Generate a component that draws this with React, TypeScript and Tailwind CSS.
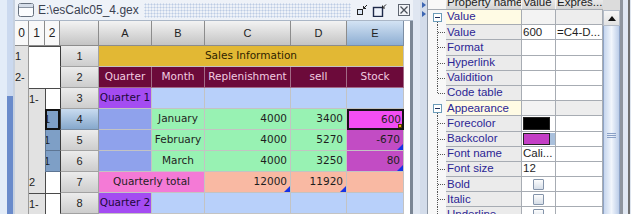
import React from 'react';

type CellProps = { className: string; children?: React.ReactNode };

function Cell({ className, children }: CellProps) {
  return <div className={`relative flex items-center overflow-hidden whitespace-nowrap ${className}`}>{children}</div>;
}

// blue comment marker in the bottom right corner of a cell
function Corner() {
  return (
    <svg className="absolute bottom-0 right-0" width="6" height="6" viewBox="0 0 6 6">
      <polygon points="6,0 6,6 0,6" fill="#1632e6" />
    </svg>
  );
}

function TitleBar() {
  return (
    <div className="flex h-[21px] items-center border-b border-[#aab6c6] bg-[#eef2f8]">
      <svg className="ml-[3px] shrink-0" width="16" height="14" viewBox="0 0 16 14">
        <rect x="0.5" y="0.5" width="15" height="13" rx="2" fill="#fbfcfe" stroke="#66707e" />
        <rect x="1" y="1" width="14" height="3" fill="#d5dde9" />
        <line x1="1" y1="4.5" x2="15" y2="4.5" stroke="#8a94a2" />
      </svg>
      <span className="ml-[4px] text-[12px] text-[#3a4150]">{'E:\\esCalc05_4.gex'}</span>
      <div className="mx-[5px] h-[15px] flex-1 bg-[image:radial-gradient(circle,#bccbe4_0.9px,transparent_1.1px)] bg-[length:3px_3px]" />
      <svg className="shrink-0" width="12" height="12" viewBox="0 0 12 12">
        <rect x="1.5" y="5.5" width="5" height="5" fill="#dbe6f5" stroke="#222" />
        <path d="M11 1 L7.5 4.5 M7.5 2 V4.5 H10" stroke="#222" fill="none" />
      </svg>
      <svg className="ml-[4px] shrink-0" width="15" height="13" viewBox="0 0 15 13">
        <rect x="1.5" y="3.5" width="9" height="9" fill="#eef3fb" stroke="#1e2a4a" strokeWidth="1.4" />
        <path d="M14 0.5 L10.5 4 M10.5 1.5 V4 H13" stroke="#222" fill="none" />
      </svg>
      <svg className="ml-[11px] mr-[3px] shrink-0" width="12" height="12" viewBox="0 0 12 12">
        <rect x="0.5" y="0.5" width="11" height="11" fill="#f2f4f8" stroke="#5d6470" />
        <path d="M2.5 2.5 L9.5 9.5 M9.5 2.5 L2.5 9.5" stroke="#4a505a" strokeWidth="1.3" />
      </svg>
    </div>
  );
}

function Sheet() {
  const line = 'border-r border-b border-[#c3c3c3]';
  const colHead = "justify-center border-r border-b border-[#8c8c8c] bg-linear-to-b from-[#f3f3f3] to-[#c4c4c4] font-['Liberation_Sans',Arial,sans-serif] text-[11px] text-[#222]";
  const rowHead = "justify-center border-r border-b border-l border-[#a2a2a2] border-l-[#3c3c3c] bg-linear-to-b from-[#ececec] to-[#cdcdcd] font-['Liberation_Sans',Arial,sans-serif] text-[11px] text-[#222]";
  const outline = "bg-[#e2e2e2] font-['Liberation_Sans',Arial,sans-serif] text-[11px] text-[#222]";
  const lvl = "justify-center border-r border-b border-[#8c8c8c] bg-[#f9f9f9] font-['Liberation_Sans',Arial,sans-serif] text-[12px] text-[#222]";

  return (
    <div className="grid w-[389px] grid-cols-[14px_16px_15px_39px_53px_53px_86px_56px_57px] grid-rows-[25px_repeat(8,21px)] font-['DejaVu_Sans',sans-serif] text-[10.5px] text-[#1e1e1e]">
      {/* header row */}
      <Cell className={`col-start-1 row-start-1 ${lvl}`}>0</Cell>
      <Cell className={`col-start-2 row-start-1 ${lvl}`}>1</Cell>
      <Cell className={`col-start-3 row-start-1 ${lvl}`}>2</Cell>
      <Cell className={`col-start-4 row-start-1 ${colHead}`} />
      <Cell className={`col-start-5 row-start-1 ${colHead}`}>A</Cell>
      <Cell className={`col-start-6 row-start-1 ${colHead}`}>B</Cell>
      <Cell className={`col-start-7 row-start-1 ${colHead}`}>C</Cell>
      <Cell className={`col-start-8 row-start-1 ${colHead}`}>D</Cell>
      <Cell className="col-start-9 row-start-1 justify-center border-r border-b border-[#7c8ea4] bg-linear-to-b from-[#d3e3f4] to-[#8eaed2] font-['Liberation_Sans',Arial,sans-serif] text-[11px] text-[#222]">E</Cell>

      {/* outline levels */}
      <Cell className={`col-start-1 row-start-2 border-r border-[#9a9a9a] ${outline}`}>1</Cell>
      <Cell className={`col-start-1 row-start-3 border-r border-[#9a9a9a] ${outline}`}>2-</Cell>
      <Cell className={`col-start-1 row-start-4 row-span-6 border-r border-[#9a9a9a] ${outline}`} />
      <Cell className="col-start-2 col-span-2 row-start-2 row-span-2 border-t border-[#4a4a4a] bg-white" />
      <Cell className={`col-start-2 row-start-4 border-t border-[#4a4a4a] ${outline}`}>1-</Cell>
      <Cell className="col-start-3 row-start-4 border-t border-l border-[#4a4a4a] bg-white" />
      <Cell className={`col-start-2 row-start-5 row-span-3 ${outline}`} />
      <Cell className="col-start-3 row-start-5 border-2 border-[#111] bg-[#7e9fc6] pl-0 text-[11px] font-['Liberation_Sans',Arial,sans-serif]"><span className="-ml-[3px]">1</span></Cell>
      <Cell className="col-start-3 row-start-6 border-b border-l border-[#5d7593] bg-[#7e9fc6] text-[11px] font-['Liberation_Sans',Arial,sans-serif]"><span className="-ml-[2px]">1</span></Cell>
      <Cell className="col-start-3 row-start-7 border-b border-l border-[#5d7593] bg-[#7e9fc6] text-[11px] font-['Liberation_Sans',Arial,sans-serif]"><span className="-ml-[2px]">1</span></Cell>
      <Cell className={`col-start-2 row-start-8 ${outline}`}>2</Cell>
      <Cell className="col-start-3 row-start-8 border-l border-[#4a4a4a] bg-white" />
      <Cell className={`col-start-2 row-start-9 border-t border-[#4a4a4a] ${outline}`}>1-</Cell>
      <Cell className="col-start-3 row-start-9 border-t border-l border-[#4a4a4a] bg-white" />

      {/* row numbers */}
      <Cell className={`col-start-4 row-start-2 ${rowHead}`}>1</Cell>
      <Cell className={`col-start-4 row-start-3 ${rowHead}`}>2</Cell>
      <Cell className={`col-start-4 row-start-4 ${rowHead}`}>3</Cell>
      <Cell className="col-start-4 row-start-5 justify-center border-r border-b border-l border-[#7c8ea4] border-l-[#3c3c3c] bg-linear-to-b from-[#c9dcf0] to-[#86a8cc] font-['Liberation_Sans',Arial,sans-serif] text-[11px] text-[#222]">4</Cell>
      <Cell className={`col-start-4 row-start-6 ${rowHead}`}>5</Cell>
      <Cell className={`col-start-4 row-start-7 ${rowHead}`}>6</Cell>
      <Cell className={`col-start-4 row-start-8 ${rowHead}`}>7</Cell>
      <Cell className={`col-start-4 row-start-9 ${rowHead}`}>8</Cell>

      {/* sheet row 1 */}
      <Cell className={`col-start-5 col-span-5 row-start-2 justify-center bg-[#e2b834] text-[#2e2300] ${line}`}>Sales Information</Cell>

      {/* sheet row 2 */}
      <Cell className="col-start-5 row-start-3 justify-center border-r border-b border-[#a26a86] bg-[#6c0a3a] text-[#f2cde0]">Quarter</Cell>
      <Cell className="col-start-6 row-start-3 justify-center border-r border-b border-[#a26a86] bg-[#6c0a3a] text-[#f2cde0]">Month</Cell>
      <Cell className="col-start-7 row-start-3 justify-center border-r border-b border-[#a26a86] bg-[#6c0a3a] text-[#f2cde0]">Replenishment</Cell>
      <Cell className="col-start-8 row-start-3 justify-center border-r border-b border-[#a26a86] bg-[#6c0a3a] text-[#f2cde0]">sell</Cell>
      <Cell className="col-start-9 row-start-3 justify-center border-r border-b border-[#a26a86] bg-[#6c0a3a] text-[#f2cde0]">Stock</Cell>

      {/* sheet row 3 */}
      <Cell className={`col-start-5 row-start-4 justify-center bg-[#a44cf2] text-[#1c0838] ${line}`}>Quarter 1</Cell>
      <Cell className={`col-start-6 row-start-4 bg-[#b8d0fa] ${line}`} />
      <Cell className={`col-start-7 row-start-4 bg-[#b8d0fa] ${line}`} />
      <Cell className={`col-start-8 row-start-4 bg-[#b8d0fa] ${line}`} />
      <Cell className={`col-start-9 row-start-4 bg-[#b8d0fa] ${line}`} />

      {/* sheet rows 4-6 */}
      <Cell className={`col-start-5 row-start-5 bg-[#8fa2ec] ${line}`} />
      <Cell className={`col-start-6 row-start-5 justify-center bg-[#98f2b3] ${line}`}>January</Cell>
      <Cell className={`col-start-7 row-start-5 justify-end pr-[3px] bg-[#98f2b3] ${line}`}>4000</Cell>
      <Cell className={`col-start-8 row-start-5 justify-end pr-[3px] bg-[#98f2b3] ${line}`}>3400</Cell>
      <Cell className="col-start-9 row-start-5 justify-end border-2 border-[#151515] bg-[#f24ef2] pr-[1px]">
        600
        <span className="absolute bottom-0 right-0 h-[4px] w-[4px] border border-[#5a3a00] bg-[#f0a818]" />
      </Cell>

      <Cell className={`col-start-5 row-start-6 bg-[#8fa2ec] ${line}`} />
      <Cell className={`col-start-6 row-start-6 justify-center bg-[#98f2b3] ${line}`}>February</Cell>
      <Cell className={`col-start-7 row-start-6 justify-end pr-[3px] bg-[#98f2b3] ${line}`}>4000</Cell>
      <Cell className={`col-start-8 row-start-6 justify-end pr-[3px] bg-[#98f2b3] ${line}`}>5270</Cell>
      <Cell className={`col-start-9 row-start-6 justify-end pr-[3px] bg-[#c24cc4] ${line}`}>-670<Corner /></Cell>

      <Cell className={`col-start-5 row-start-7 bg-[#8fa2ec] ${line}`} />
      <Cell className={`col-start-6 row-start-7 justify-center bg-[#98f2b3] ${line}`}>March</Cell>
      <Cell className={`col-start-7 row-start-7 justify-end pr-[3px] bg-[#98f2b3] ${line}`}>4000</Cell>
      <Cell className={`col-start-8 row-start-7 justify-end pr-[3px] bg-[#98f2b3] ${line}`}>3250</Cell>
      <Cell className={`col-start-9 row-start-7 justify-end pr-[3px] bg-[#c24cc4] ${line}`}>80<Corner /></Cell>

      {/* sheet row 7 */}
      <Cell className={`col-start-5 col-span-2 row-start-8 justify-center bg-[#f47ad6] ${line}`}>Quarterly total</Cell>
      <Cell className={`col-start-7 row-start-8 justify-end pr-[3px] bg-[#f9b9a3] ${line}`}>12000<Corner /></Cell>
      <Cell className={`col-start-8 row-start-8 justify-end pr-[3px] bg-[#f9b9a3] ${line}`}>11920<Corner /></Cell>
      <Cell className={`col-start-9 row-start-8 bg-[#f9b9a3] ${line}`} />

      {/* sheet row 8 */}
      <Cell className={`col-start-5 row-start-9 justify-center bg-[#a44cf2] text-[#1c0838] ${line}`}>Quarter 2</Cell>
      <Cell className={`col-start-6 row-start-9 bg-[#b8d0fa] ${line}`} />
      <Cell className={`col-start-7 row-start-9 bg-[#b8d0fa] ${line}`} />
      <Cell className={`col-start-8 row-start-9 bg-[#b8d0fa] ${line}`} />
      <Cell className={`col-start-9 row-start-9 bg-[#b8d0fa] ${line}`} />
    </div>
  );
}

type Prop = {
  name: string;
  group?: boolean;
  last?: boolean;
  value?: string;
  expr?: string;
  swatch?: string;
  button?: boolean;
  check?: boolean;
};

const props: Prop[] = [
  { name: 'Value', group: true },
  { name: 'Value', value: '600', expr: '=C4-D...' },
  { name: 'Format' },
  { name: 'Hyperlink' },
  { name: 'Validition' },
  { name: 'Code table', last: true },
  { name: 'Appearance', group: true },
  { name: 'Forecolor', swatch: '#000000' },
  { name: 'Backcolor', swatch: '#c33fc5', button: true },
  { name: 'Font name', value: 'Cali...' },
  { name: 'Font size', value: '12' },
  { name: 'Bold', check: true },
  { name: 'Italic', check: true },
  { name: 'Underline', check: true },
];

function Tree({ group, last }: { group?: boolean; last?: boolean }) {
  if (group) {
    return (
      <svg width="18" height="15" viewBox="0 0 18 15">
        <line x1="9.5" y1="12" x2="9.5" y2="15" stroke="#555" strokeDasharray="1 1" />
        <rect x="5.5" y="3.5" width="8" height="8" fill="#fff" stroke="#6b9bb8" />
        <line x1="7" y1="7.5" x2="12" y2="7.5" stroke="#1d2f5c" />
      </svg>
    );
  }
  return (
    <svg width="18" height="16" viewBox="0 0 18 16">
      <line x1="9.5" y1="0" x2="9.5" y2={last ? 8 : 16} stroke="#555" strokeDasharray="1 1" />
      <line x1="10" y1="7.5" x2="18" y2="7.5" stroke="#555" strokeDasharray="1 1" />
    </svg>
  );
}

function PropertyRow({ p }: { p: Prop }) {
  const cellLine = 'border-r border-b border-[#a7acb3]';
  return (
    <div className="flex h-[15.2px]">
      <div className="flex w-[18px] shrink-0 items-start overflow-hidden bg-[#f8f8f8]">
        <Tree group={p.group} last={p.last} />
      </div>
      <div className={`flex w-[76px] shrink-0 items-center pl-[1px] text-[#2c2594] ${cellLine} ${p.group ? 'bg-[#fffbe4]' : 'bg-[#ebebeb]'}`}>
        {p.name}
      </div>
      <div className={`flex w-[34px] shrink-0 items-center overflow-hidden whitespace-nowrap pl-[1px] text-[#1e1e1e] ${cellLine} ${p.group ? 'bg-[#f3f3f3]' : 'bg-white'}`}>
        {p.value}
        {p.swatch && (
          <div className="flex h-full items-end py-[1px]">
            <div className={`h-full w-[27px] border border-[#222] ${p.swatch === '#000000' ? 'bg-black' : 'bg-[#c33fc5]'}`} />
            {p.button ? <div className="h-full w-[5px] bg-[#a9c0dc]" /> : <div className="w-[5px]" />}
            <span className="mb-[1px] ml-[1px] h-[1px] w-[1px] bg-[#333]" />
          </div>
        )}
        {p.check && (
          <div className="ml-[10px] h-[11px] w-[11px] rounded-[1px] border border-[#8494aa] bg-linear-to-b from-[#fdfdfd] to-[#d6dee8]" />
        )}
      </div>
      <div className={`flex w-[47px] shrink-0 items-center overflow-hidden whitespace-nowrap pl-[1px] text-[#1e1e1e] ${cellLine} ${p.group ? 'bg-[#ededed]' : 'bg-white'}`}>
        {p.expr}
      </div>
    </div>
  );
}

function PropertyPanel() {
  return (
    <div className="flex w-[203px] shrink-0 bg-white font-['Liberation_Sans',Arial,sans-serif] text-[11.5px]">
      <div className="flex w-[175px] shrink-0 flex-col">
        <div className="flex h-[10px] shrink-0 overflow-hidden border-b border-[#a7acb3] bg-linear-to-b from-[#e9e9e9] to-[#d4d4d4] text-[#222]">
          <div className="w-[18px] shrink-0 bg-[#f8f8f8]" />
          <div className="flex w-[76px] shrink-0 items-end overflow-hidden whitespace-nowrap border-r border-[#f4f4f4] pl-[1px]"><span className="h-[14px] shrink-0 leading-[14px]">Property name</span></div>
          <div className="flex w-[34px] shrink-0 items-end overflow-hidden whitespace-nowrap border-r border-[#f4f4f4] pl-[1px]"><span className="h-[14px] shrink-0 leading-[14px]">Value</span></div>
          <div className="flex w-[47px] shrink-0 items-end overflow-hidden whitespace-nowrap pl-[1px]"><span className="h-[14px] shrink-0 leading-[14px]">Expres...</span></div>
        </div>
        {props.map((p, i) => (
          <PropertyRow key={i} p={p} />
        ))}
      </div>

      {/* vertical scrollbar */}
      <div className="flex w-[17px] shrink-0 flex-col">
        <div className="h-[10px] shrink-0 bg-[#dcdcdc]" />
        <div className="flex h-[16px] shrink-0 items-center justify-center border border-[#b4bcc8] bg-linear-to-b from-[#f6f6f6] to-[#e2e2e2]">
          <svg width="8" height="5" viewBox="0 0 8 5">
            <polygon points="4,0 8,5 0,5" fill="#111" />
          </svg>
        </div>
        <div className="flex flex-1 flex-col items-center border-x border-[#8ea3c6] bg-linear-to-r from-[#c6d6ee] via-[#f2f6fc] to-[#bccde8] pt-[107px]">
          <div className="h-[1px] w-[9px] bg-[#8aa0c6]" />
          <div className="mt-[1px] h-[1px] w-[9px] bg-[#8aa0c6]" />
          <div className="mt-[1px] h-[1px] w-[9px] bg-[#8aa0c6]" />
        </div>
      </div>

      <div className="flex w-[11px] shrink-0">
        <div className="w-[3px] bg-[#8f959e]" />
        <div className="w-[5px] bg-[#e0e7f2]" />
        <div className="w-[2px] bg-[#707070]" />
        <div className="w-[1px] bg-[#dde4ee]" />
      </div>
    </div>
  );
}

function Splitter() {
  return (
    <div className="flex w-[15px] shrink-0">
      <div className="w-[7px] bg-[#dfe6f1]" />
      <div className="flex w-[7px] flex-col items-center gap-[3px] bg-[#d3dcea] pt-[2px]">
        <svg width="4" height="6" viewBox="0 0 4 6">
          <polygon points="0,0 4,3 0,6" fill="#3d66b2" />
        </svg>
        <svg width="4" height="6" viewBox="0 0 4 6">
          <polygon points="0,0 4,3 0,6" fill="#3d66b2" />
        </svg>
      </div>
      <div className="w-[1px] bg-[#8c96a4]" />
    </div>
  );
}

export default function App() {
  return (
    <div className="flex h-[214px] w-[631px] overflow-hidden bg-[#e4ecf7] font-['Liberation_Sans',Arial,sans-serif]">
      {/* desktop edge behind the sheet window */}
      <div className="flex w-[13px] shrink-0">
        <div className="w-[7px] bg-[#e3ecf8]" />
        <div className="flex w-[6px] flex-col">
          <div className="h-[96px] bg-[#cbd9ef]" />
          <div className="flex-1 bg-[#6a8bcb]" />
        </div>
      </div>

      {/* sheet window */}
      <div className="flex w-[400px] shrink-0 flex-col border-l-2 border-[#c7d1df]">
        <TitleBar />
        <div className="flex flex-1">
          <Sheet />
          <div className="w-[6px] bg-white" />
          <div className="w-[3px] bg-[#7b8694]" />
        </div>
      </div>

      <Splitter />
      <PropertyPanel />
    </div>
  );
}
